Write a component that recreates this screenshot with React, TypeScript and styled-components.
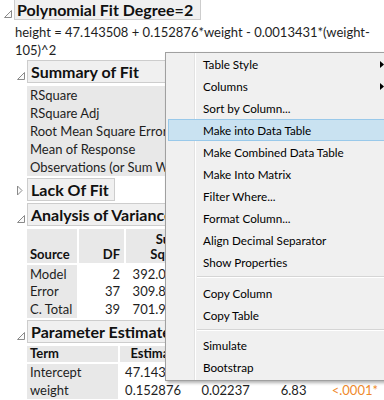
import React from "react";
import styled, { createGlobalStyle } from "styled-components";

const GlobalStyle = createGlobalStyle`
  * { box-sizing: border-box; }
  html, body { margin: 0; padding: 0; background: #fff; }
  body {
    width: 384px;
    height: 400px;
    overflow: hidden;
    font-family: Lato, "Noto Sans", sans-serif;
    font-size: 13px;
    color: #1e1e1e;
  }
`;

interface MenuEntry {
  label?: string;
  submenu?: boolean;
  active?: boolean;
  separator?: boolean;
}

const menuItems: MenuEntry[] = [
  { label: "Table Style", submenu: true },
  { label: "Columns", submenu: true },
  { label: "Sort by Column..." },
  { label: "Make into Data Table", active: true },
  { label: "Make Combined Data Table" },
  { label: "Make Into Matrix" },
  { label: "Filter Where..." },
  { label: "Format Column..." },
  { label: "Align Decimal Separator" },
  { label: "Show Properties" },
  { separator: true },
  { label: "Copy Column" },
  { label: "Copy Table" },
  { separator: true },
  { label: "Simulate" },
  { label: "Bootstrap" },
];

const summaryRows = [
  ["RSquare", "0.558461"],
  ["RSquare Adj", "0.534594"],
  ["Root Mean Square Error", "2.893881"],
  ["Mean of Response", "62.55"],
  ["Observations (or Sum Wgts)", "40"],
];

const anovaRows = [
  ["Model", "2", "392.07615", "196.038"],
  ["Error", "37", "309.87385", "8.375"],
  ["C. Total", "39", "701.95000", ""],
];

const Toggle: React.FC<{ open?: boolean }> = ({ open = true }) =>
  open ? (
    <svg width="10" height="10" viewBox="0 0 10 10">
      <polygon points="1.5,8.5 8.5,8.5 8.5,1.5" fill="#fafafa" stroke="#8a8a8a" strokeWidth="1" />
    </svg>
  ) : (
    <svg width="10" height="11" viewBox="0 0 10 11">
      <polygon points="1.5,1 1.5,10 6,5.5" fill="#fafafa" stroke="#8a8a8a" strokeWidth="1" />
    </svg>
  );

const App: React.FC = () => {
  return (
    <>
      <GlobalStyle />
      <Report>
        <Outline>
          <ToggleCell $top={6}>
            <Toggle />
          </ToggleCell>
          <div>
            <TitleBox>Polynomial Fit Degree=2</TitleBox>
            <Equation>
              <span>height = 47.143508 + 0.152876*weight - 0.0013431*(weight-</span>
              <span>105)^2</span>
            </Equation>

            <Outline $gap={1}>
              <ToggleCell>
                <Toggle />
              </ToggleCell>
              <div>
                <HeaderBox $width={250}>Summary of Fit</HeaderBox>
                <Table>
                  <tbody>
                    {summaryRows.map(([label, value]) => (
                      <tr key={label}>
                        <Td $label $w={172} $h={18}>
                          {label}
                        </Td>
                        <Td $align="right" $w={80} $h={18}>
                          {value}
                        </Td>
                      </tr>
                    ))}
                  </tbody>
                </Table>
              </div>
            </Outline>

            <Outline $gap={2}>
              <ToggleCell $top={5}>
                <Toggle open={false} />
              </ToggleCell>
              <div>
                <HeaderBox $width={88}>Lack Of Fit</HeaderBox>
              </div>
            </Outline>

            <Outline $gap={2}>
              <ToggleCell>
                <Toggle />
              </ToggleCell>
              <div>
                <HeaderBox $width={250}>Analysis of Variance</HeaderBox>
                <Table>
                  <thead>
                    <tr>
                      <Th $w={52} $h={36}>Source</Th>
                      <Th $w={47} $h={36} $align="right">DF</Th>
                      <Th $w={76} $h={36} $align="right">
                        Sum of
                        <br />
                        Squares
                      </Th>
                      <Th $w={70} $h={36} $align="right">
                        Mean Square
                      </Th>
                    </tr>
                  </thead>
                  <tbody>
                    {anovaRows.map(([src, df, ss, ms]) => (
                      <tr key={src}>
                        <Td $label $h={17.5}>{src}</Td>
                        <Td $align="right" $h={17.5}>{df}</Td>
                        <Td $align="right" $h={17.5}>{ss}</Td>
                        <Td $align="right" $h={17.5}>{ms}</Td>
                      </tr>
                    ))}
                  </tbody>
                </Table>
              </div>
            </Outline>

            <Outline $gap={2}>
              <ToggleCell>
                <Toggle />
              </ToggleCell>
              <div>
                <HeaderBox $width={250}>Parameter Estimates</HeaderBox>
                <Table>
                  <thead>
                    <tr>
                      <Th $w={94} $h={18}>Term</Th>
                      <Th $w={67} $h={18} $align="right">Estimate</Th>
                      <Th $w={69} $h={18} $align="right">Std Error</Th>
                      <Th $w={57} $h={18} $align="right">t Ratio</Th>
                      <Th $w={72} $h={18} $align="right">Prob&gt;|t|</Th>
                    </tr>
                  </thead>
                  <tbody>
                    <tr>
                      <Td $label $h={17.5}>Intercept</Td>
                      <Td $align="right" $h={17.5}>47.14351</Td>
                      <Td $align="right" $h={17.5}>0.93262</Td>
                      <Td $align="right" $h={17.5}>50.55</Td>
                      <Td $align="right" $h={17.5} $color="#ef8a2c">&lt;.0001*</Td>
                    </tr>
                    <tr>
                      <Td $label $h={17.5}>weight</Td>
                      <Td $align="right" $h={17.5}>0.152876</Td>
                      <Td $align="right" $h={17.5}>0.02237</Td>
                      <Td $align="right" $h={17.5}>6.83</Td>
                      <Td $align="right" $h={17.5} $color="#ef8a2c">&lt;.0001*</Td>
                    </tr>
                  </tbody>
                </Table>
              </div>
            </Outline>
          </div>
        </Outline>

        <ContextMenu>
          {menuItems.map((item, i) =>
            item.separator ? (
              <MenuSeparator key={i} />
            ) : (
              <MenuItem key={i} $active={item.active}>
                <span>{item.label}</span>
                {item.submenu && (
                  <svg width="4" height="7" viewBox="0 0 4 7">
                    <polygon points="0,0 4,3.5 0,7" fill="#000" />
                  </svg>
                )}
              </MenuItem>
            )
          )}
        </ContextMenu>
      </Report>
    </>
  );
};

const Report = styled.div`
  position: relative;
  width: 384px;
  height: 400px;
  overflow: hidden;
  padding-left: 1px;
`;

const Outline = styled.div<{ $gap?: number }>`
  display: grid;
  grid-template-columns: 13px 1fr;
  margin-top: ${p => p.$gap ?? 0}px;
`;

const ToggleCell = styled.div<{ $top?: number }>`
  padding-top: ${p => p.$top ?? 8}px;
  padding-left: 2px;
`;

const TitleBox = styled.div`
  width: fit-content;
  height: 22px;
  margin-top: -2px;
  padding: 1px 7px 0 2px;
  background: #f0f0f0;
  border: 1px solid #cdcdcd;
  font-size: 16px;
  font-weight: bold;
  line-height: 19px;
  white-space: nowrap;
  color: #111;
`;

const Equation = styled.div`
  margin-top: 3px;
  display: flex;
  flex-direction: column;
  line-height: 18px;
  white-space: nowrap;
  padding-left: 1px;
`;

const HeaderBox = styled.div<{ $width: number }>`
  width: ${p => p.$width}px;
  height: 23px;
  padding-left: 3px;
  background: #f0f0f0;
  border: 1px solid #cdcdcd;
  font-size: 16px;
  font-weight: bold;
  line-height: 21px;
  white-space: nowrap;
  color: #111;
`;

const Table = styled.table`
  border-collapse: separate;
  border-spacing: 0;
  margin-top: 3px;
  font-size: 13px;
  white-space: nowrap;
  table-layout: fixed;
`;

const Th = styled.th<{ $w: number; $h: number; $align?: string }>`
  width: ${p => p.$w}px;
  height: ${p => p.$h}px;
  padding: 0 4px 1px 3px;
  background: #e8e8e8;
  border-right: 2px solid #fff;
  border-bottom: 2px solid #fff;
  text-align: ${p => p.$align ?? "left"};
  vertical-align: bottom;
  font-size: 13px;
  font-weight: bold;
  line-height: 15px;
  color: #111;
`;

const Td = styled.td<{ $label?: boolean; $align?: string; $w?: number; $h: number; $color?: string }>`
  ${p => (p.$w ? `width: ${p.$w}px;` : "")}
  height: ${p => p.$h}px;
  padding: 0 4px 0 3px;
  background: ${p => (p.$label ? "#e8e8e8" : "transparent")};
  border-right: 2px solid #fff;
  text-align: ${p => p.$align ?? "left"};
  color: ${p => p.$color ?? "#1e1e1e"};
  line-height: 16px;
`;

const ContextMenu = styled.div`
  position: absolute;
  left: 165px;
  top: 52px;
  width: 232px;
  padding: 0 2px 2px 2px;
  border: 1px solid #a0a0a0;
  box-shadow: 2px 2px 3px rgba(0, 0, 0, 0.3);
  background:
    linear-gradient(
      to right,
      transparent 28px,
      #e2e2e2 28px,
      #e2e2e2 29px,
      #ffffff 29px,
      #ffffff 30px,
      transparent 30px
    ),
    #f0f0f0;
  font-size: 11.7px;
  color: #000;
`;

const MenuItem = styled.div<{ $active?: boolean }>`
  position: relative;
  display: flex;
  align-items: center;
  justify-content: space-between;
  height: 22px;
  padding: 0 9px 0 34px;
  border: 1px solid ${p => (p.$active ? "#99c9ea" : "transparent")};
  background: ${p => (p.$active ? "#c9e2f1" : "transparent")};
  white-space: nowrap;
`;

const MenuSeparator = styled.div`
  height: 8.5px;
  margin-left: 29px;
  display: flex;
  flex-direction: column;
  justify-content: center;

  &::before {
    content: "";
    height: 1px;
    background: #d5d5d5;
  }
  &::after {
    content: "";
    height: 1px;
    background: #ffffff;
  }
`;

export default App;
